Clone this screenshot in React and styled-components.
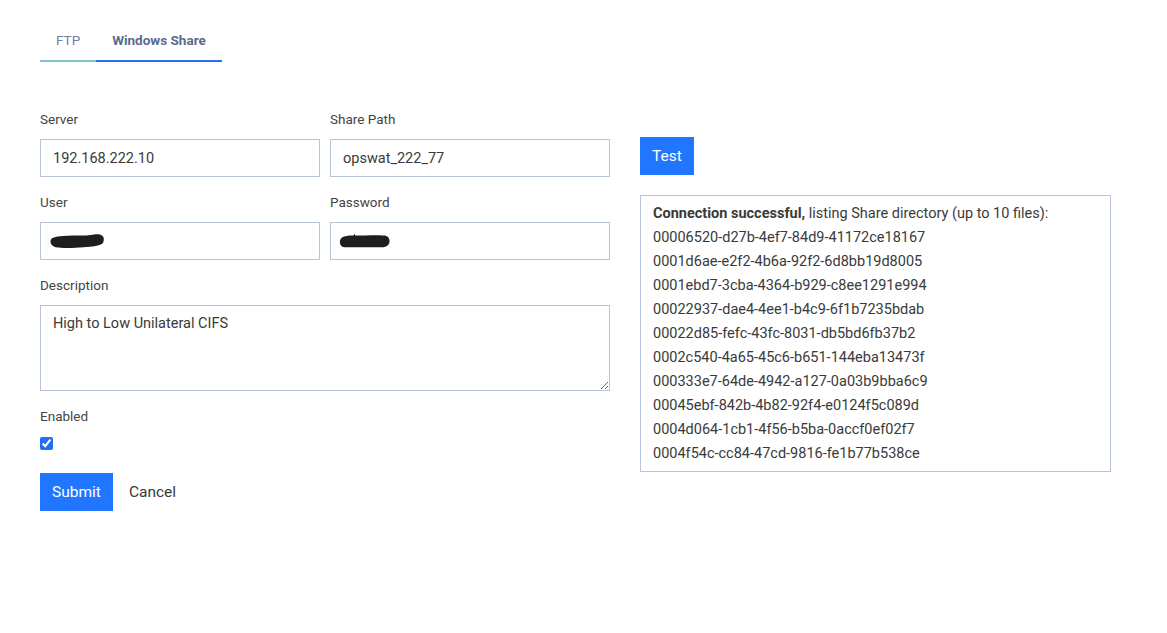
import React, { useState } from "react";
import styled, { createGlobalStyle } from "styled-components";

const GlobalStyle = createGlobalStyle`
  body {
    margin: 0;
    background: #fff;
    font-family: Roboto, "Liberation Sans", sans-serif;
    color: #3a3a3a;
  }
`;

const files = [
  "00006520-d27b-4ef7-84d9-41172ce18167",
  "0001d6ae-e2f2-4b6a-92f2-6d8bb19d8005",
  "0001ebd7-3cba-4364-b929-c8ee1291e994",
  "00022937-dae4-4ee1-b4c9-6f1b7235bdab",
  "00022d85-fefc-43fc-8031-db5bd6fb37b2",
  "0002c540-4a65-45c6-b651-144eba13473f",
  "000333e7-64de-4942-a127-0a03b9bba6c9",
  "00045ebf-842b-4b82-92f4-e0124f5c089d",
  "0004d064-1cb1-4f56-b5ba-0accf0ef02f7",
  "0004f54c-cc84-47cd-9816-fe1b77b538ce",
];

// black marker strokes hiding the credentials
const Scribble = ({ d }) => (
  <Redact width="60" height="18" viewBox="0 0 70 20" preserveAspectRatio="none">
    <path d={d} fill="#1e1e1e" />
  </Redact>
);

const App = () => {
  const [tab, setTab] = useState("share");
  const [enabled, setEnabled] = useState(true);

  return (
    <Page>
      <GlobalStyle />
      <Tabs>
        <Tab $active={tab === "ftp"} $line="#7fc0d3" onClick={() => setTab("ftp")}>
          FTP
        </Tab>
        <Tab $active={tab === "share"} $line="#2a6fea" onClick={() => setTab("share")}>
          Windows Share
        </Tab>
      </Tabs>

      <Layout>
        <Form>
          <Field>
            <Label>Server</Label>
            <Input defaultValue="192.168.222.10" />
          </Field>
          <Field>
            <Label>Share Path</Label>
            <Input defaultValue="opswat_222_77" />
          </Field>
          <Field>
            <Label>User</Label>
            <InputWrap>
              <Input defaultValue="" />
              <Scribble d="M6 6 C12 4 30 4 44 4 C52 3 56 2 60 3 C64 4 65 8 63 12 C60 16 50 16 40 17 C28 18 14 18 8 17 C3 16 1 12 2 9 C3 7 4 6 6 6 Z" />
            </InputWrap>
          </Field>
          <Field>
            <Label>Password</Label>
            <InputWrap>
              <Input defaultValue="" />
              <Scribble d="M6 5 C10 4 14 4 17 4 L18 2 L19 4 C30 4 44 3 52 4 C57 4 59 7 59 10 C59 14 56 17 50 17 C36 17 20 17 8 17 C3 17 1 14 1 11 C1 8 3 6 6 5 Z" />
            </InputWrap>
          </Field>
          <Field $wide>
            <Label>Description</Label>
            <TextArea defaultValue="High to Low Unilateral CIFS" />
          </Field>
          <Field $wide $gap={23}>
            <Label>Enabled</Label>
            <Check
              type="checkbox"
              checked={enabled}
              onChange={(e) => setEnabled(e.target.checked)}
            />
          </Field>
          <Actions>
            <Button>Submit</Button>
            <LinkButton>Cancel</LinkButton>
          </Actions>
        </Form>

        <Side>
          <Button>Test</Button>
          <Result>
            <Line>
              <strong>Connection successful,</strong> listing Share directory (up to 10 files):
            </Line>
            {files.map((f) => (
              <Line key={f}>{f}</Line>
            ))}
          </Result>
        </Side>
      </Layout>
    </Page>
  );
};

const Page = styled.div`
  padding: 20px 40px;
`;

const Tabs = styled.div`
  display: flex;
`;

const Tab = styled.div`
  padding: 11px 16px;
  font-size: 13.5px;
  line-height: 18px;
  font-weight: ${(p) => (p.$active ? 700 : 400)};
  color: ${(p) => (p.$active ? "#5b6a8f" : "#72809f")};
  border-bottom: 2px solid ${(p) => p.$line};
  cursor: pointer;
`;

const Layout = styled.div`
  display: flex;
  gap: 30px;
  margin-top: 48px;
`;

const Form = styled.div`
  display: grid;
  grid-template-columns: 280px 280px;
  column-gap: 10px;
  width: 570px;
`;

const Field = styled.div`
  display: flex;
  flex-direction: column;
  align-items: flex-start;
  grid-column: ${(p) => (p.$wide ? "1 / span 2" : "auto")};
  margin-bottom: ${(p) => p.$gap || 16}px;
`;

const Label = styled.label`
  font-size: 13.5px;
  line-height: 18px;
  color: #444;
  margin-bottom: 11px;
`;

const InputWrap = styled.div`
  position: relative;
  width: 100%;
`;

const Redact = styled.svg`
  position: absolute;
  left: 9px;
  top: 10px;
  pointer-events: none;
`;

const Input = styled.input`
  box-sizing: border-box;
  width: 100%;
  height: 38px;
  padding: 0 12px;
  border: 1px solid #b8c4de;
  border-radius: 0;
  font-family: inherit;
  font-size: 14.5px;
  color: #3a3a3a;
  outline: none;
`;

const TextArea = styled.textarea`
  box-sizing: border-box;
  width: 100%;
  height: 86px;
  padding: 8px 12px;
  border: 1px solid #b8c4de;
  border-radius: 0;
  font-family: inherit;
  font-size: 14.5px;
  line-height: 20px;
  color: #3a3a3a;
  outline: none;
`;

const Check = styled.input`
  width: 13px;
  height: 13px;
  margin: 1px 0 0;
  accent-color: #1e6ff5;
`;

const Actions = styled.div`
  grid-column: 1 / span 2;
  display: flex;
  align-items: center;
`;

const Button = styled.button`
  height: 38px;
  padding: 0 12px;
  border: none;
  border-radius: 0;
  background: #2176ff;
  color: #fff;
  font-family: inherit;
  font-size: 15.5px;
  cursor: pointer;
`;

const LinkButton = styled.button`
  height: 38px;
  padding: 0 16px;
  border: none;
  background: transparent;
  color: #3a3a3a;
  font-family: inherit;
  font-size: 15.5px;
  cursor: pointer;
`;

const Side = styled.div`
  display: flex;
  flex-direction: column;
  align-items: flex-start;
  gap: 20px;
  padding-top: 27px;
`;

const Result = styled.div`
  box-sizing: border-box;
  width: 471px;
  padding: 6px 12px 5px;
  border: 1px solid #b8c4de;
  font-size: 14.5px;
  line-height: 24px;
  color: #3a3a3a;

  strong {
    font-weight: 700;
  }
`;

const Line = styled.div`
  white-space: nowrap;
`;

export default App;
